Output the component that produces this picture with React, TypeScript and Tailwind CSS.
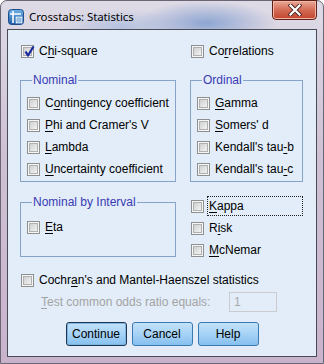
import React from "react";

// mnemonic label: underline the character at index u
function Lbl({ t, u, className = "" }: { t: string; u: number; className?: string }) {
  return (
    <span className={"whitespace-nowrap " + className}>
      {t.slice(0, u)}
      <span className="underline decoration-1 underline-offset-[2px]">{t[u]}</span>
      {t.slice(u + 1)}
    </span>
  );
}

function Box({ on = false }: { on?: boolean }) {
  return (
    <span className="relative flex h-[13px] w-[13px] shrink-0 items-center justify-center border border-[#8e8f8f] bg-[#f6f6f6]">
      <span className="h-[9px] w-[9px] border border-[#aeb0b2] bg-gradient-to-br from-[#cfd0d1] to-[#f3f3f3]" />
      {on && (
        <svg className="absolute left-[1px] top-[-1px]" width="13" height="13" viewBox="0 0 13 13">
          <path d="M2.5 6.5 L5 10.5 L10.5 1.5" fill="none" stroke="#1b2c9c" strokeWidth="2.3" strokeLinejoin="round" />
        </svg>
      )}
    </span>
  );
}

function Row({ t, u, on, focus }: { t: string; u: number; on?: boolean; focus?: boolean }) {
  return (
    <div className="flex h-[22px] items-center">
      <Box on={on} />
      {focus ? (
        <span className="ml-[3px] flex h-[20px] w-[96px] items-center border border-dotted border-[#202020] pl-[1px]">
          <Lbl t={t} u={u} />
        </span>
      ) : (
        <Lbl t={t} u={u} className="ml-[5px]" />
      )}
    </div>
  );
}

function Group({ title, className = "", children }: { title: string; className?: string; children: React.ReactNode }) {
  return (
    <fieldset className={"border border-[#86a3c9] pl-[6px] " + className}>
      <legend className="ml-[5px] px-[1px] leading-[14px] text-[#3a3ab4]">{title}</legend>
      {children}
    </fieldset>
  );
}

function Btn({ children, def = false }: { children: React.ReactNode; def?: boolean }) {
  return (
    <button
      className={
        "h-[24px] w-[61px] rounded-[3px] border bg-gradient-to-b from-[#c3e2fa] via-[#a6d2f6] to-[#86c0ef] text-[12px] text-black " +
        (def ? "border-[#1d3550] shadow-[inset_0_0_0_1px_#7cb6e4]" : "border-[#3a79ad]")
      }
    >
      {children}
    </button>
  );
}

export default function App() {
  return (
    <div className="h-[364px] w-[324px] overflow-hidden bg-white">
      <div className="flex h-[364px] w-[324px] flex-col rounded-t-[7px] border border-[#6a6675] bg-[radial-gradient(ellipse_70px_22px_at_205px_22px,#8ea6d2,transparent),radial-gradient(ellipse_60px_18px_at_120px_26px,#b4c2e0,transparent),linear-gradient(#dedbe6,#cfc2d5_40%,#c9b3cc)]">
        {/* title bar */}
        <div className="flex h-[28px] shrink-0 items-start justify-between">
          <div className="mt-[7px] flex items-center pl-[7px]">
            <svg width="16" height="16" viewBox="0 0 16 16">
              <defs>
                <linearGradient id="ic" x1="0" y1="0" x2="0" y2="1">
                  <stop offset="0" stopColor="#6fb0e8" />
                  <stop offset="1" stopColor="#1f5fa8" />
                </linearGradient>
              </defs>
              <rect x="0.5" y="0.5" width="15" height="15" rx="3" fill="url(#ic)" stroke="#1c4f8c" />
              <path d="M5 2 V14 M2 5 H13" stroke="#fff" strokeWidth="1.6" />
              <rect x="8" y="8" width="6" height="6" fill="#d7ebfb" stroke="#fff" strokeWidth="0.6" />
              <path d="M8 10 H14 M8 12 H14 M10 8 V14 M12 8 V14" stroke="#5a92cc" strokeWidth="0.6" />
            </svg>
            <span className="ml-[5px] font-['Noto_Sans','Open_Sans',sans-serif] text-[11.5px] tracking-[-0.1px] text-black">Crosstabs: Statistics</span>
          </div>
          <div className="mr-[6px] mt-[-1px] flex h-[20px] w-[45px] items-center justify-center rounded-b-[4px] border border-[#5e2218] bg-gradient-to-b from-[#e9a898] via-[#d46b55] to-[#c2432b] shadow-[inset_0_0_0_1px_#f2b7a8]">
            <svg width="14" height="12" viewBox="0 0 14 12">
              <path d="M2.5 1.5 L11.5 10.5 M11.5 1.5 L2.5 10.5" stroke="#4a2520" strokeWidth="4" strokeLinecap="square" />
              <path d="M2.5 1.5 L11.5 10.5 M11.5 1.5 L2.5 10.5" stroke="#fff" strokeWidth="2.2" strokeLinecap="square" />
            </svg>
          </div>
        </div>

        {/* client area */}
        <div className="ml-[6px] mr-[6px] flex h-[328px] flex-col border border-[#4a4c55] bg-[#e2edf9] pl-[12px] pt-[10px] font-['Liberation_Sans',Arial,sans-serif] text-[12px] text-black">
          <div className="flex gap-[14px]">
            <div className="flex w-[156px] flex-col">
              <div className="pl-[1px]">
                <Row t="Chi-square" u={1} on />
              </div>
              <Group title="Nominal" className="mt-[11px] pb-[1px] pt-[5px]">
                <Row t="Contingency coefficient" u={1} />
                <Row t="Phi and Cramer's V" u={0} />
                <Row t="Lambda" u={0} />
                <Row t="Uncertainty coefficient" u={0} />
              </Group>
            </div>
            <div className="flex w-[113px] flex-col">
              <div className="pl-[1px]">
                <Row t="Correlations" u={2} />
              </div>
              <Group title="Ordinal" className="mt-[11px] pb-[1px] pt-[5px]">
                <Row t="Gamma" u={0} />
                <Row t="Somers' d" u={0} />
                <Row t="Kendall's tau-b" u={13} />
                <Row t="Kendall's tau-c" u={13} />
              </Group>
            </div>
          </div>

          <div className="mt-[13px] flex gap-[14px]">
            <Group title="Nominal by Interval" className="h-[62px] w-[156px] pt-[7px]">
              <Row t="Eta" u={0} />
            </Group>
            <div className="flex flex-col pl-[1px]">
              <Row t="Kappa" u={0} focus />
              <Row t="Risk" u={1} />
              <Row t="McNemar" u={0} />
            </div>
          </div>

          <div className="mt-[8px] pl-[1px]">
            <Row t="Cochran's and Mantel-Haenszel statistics" u={5} />
          </div>
          <div className="mt-[1px] flex h-[20px] items-center">
            <Lbl t="Test common odds ratio equals:" u={0} className="ml-[21px] text-[#a3a3a3]" />
            <div className="ml-auto mr-[39px] flex h-[20px] w-[48px] items-center border border-[#c9cbcf] pl-[4px] text-[#aaaaaa]">1</div>
          </div>

          <div className="mt-[10px] flex justify-center gap-[5px] pr-[12px]">
            <Btn def>Continue</Btn>
            <Btn>Cancel</Btn>
            <Btn>Help</Btn>
          </div>
        </div>
      </div>
    </div>
  );
}
